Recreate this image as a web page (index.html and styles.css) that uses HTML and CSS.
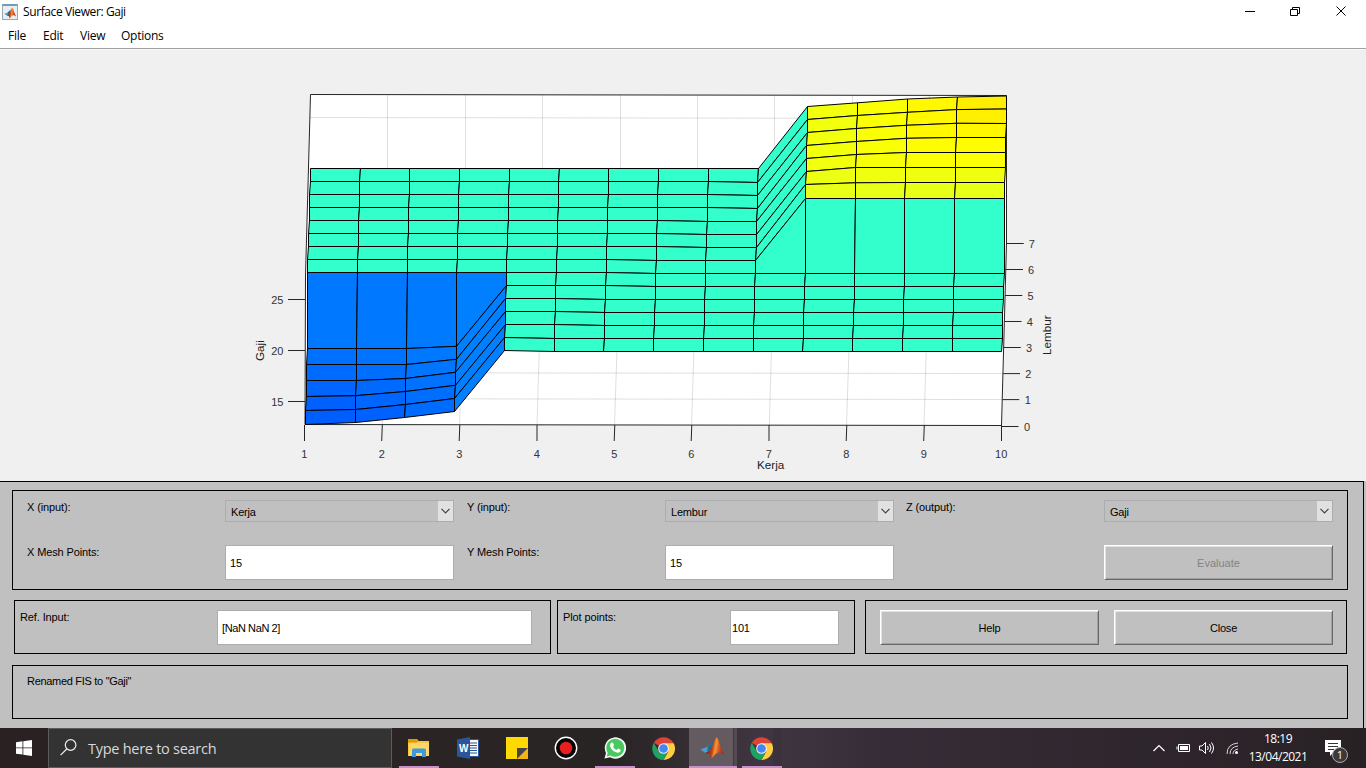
FILE: index.html
```html
<!DOCTYPE html>
<html lang="en">
<head>
<meta charset="utf-8">
<title>Surface Viewer: Gaji</title>
<link rel="stylesheet" href="styles.css">
</head>
<body>
<svg class="defs" aria-hidden="true">
  <defs>
    <linearGradient id="flame" x1="0" x2="1" y1="0" y2=".15"><stop offset="0" stop-color="#5d1a14"/><stop offset=".4" stop-color="#b53a17"/><stop offset=".62" stop-color="#f08a35"/><stop offset=".8" stop-color="#d9501c"/><stop offset="1" stop-color="#a52d10"/></linearGradient>
    <symbol id="matlab" viewBox="0 0 24 24">
      <path d="M.5 13.500 7.500 10.800 12.500 6.500 10 14.500 5.500 17z" fill="#4a9fd4"/>
      <path d="M8 10.500 12.500 6.500 14.500 4 11 14 7 15z" fill="#27688f"/>
      <path d="M5.500 17 10 14 13 8.500 15 3.500 16.700 1 18.500 4 21 12 24 18.800 19.500 16 15.500 18 11.500 22.800 9.500 18z" fill="url(#flame)"/>
      <path d="M16.700 1.500 17.500 8 15.500 17.500 12 22 14 14z" fill="#f6983a" opacity=".6"/>
    </symbol>
    <symbol id="chrome" viewBox="0 0 24 24">
      <path d="M12 12 1.800 6A12 12 0 0 1 22.400 6z" fill="#db4437"/>
      <path d="M12 6.500H22.700A12 12 0 0 1 12 24l5-9z" fill="#ffcd40"/>
      <path d="M1.800 6 7.200 15 12 17.500 16.800 15 12 24A12 12 0 0 1 1.800 6z" fill="#1da261"/>
      <circle cx="12" cy="12" r="5.600" fill="#f1f1f1"/><circle cx="12" cy="12" r="4.500" fill="#4285f4"/>
    </symbol>
  </defs>
</svg>
<div class="window">
  <header class="titlebar">
    <span class="app-icon"><svg width="14" height="12"><use href="#matlab"/></svg></span>
    <span class="title">Surface Viewer: Gaji</span>
    <svg class="controls" width="120" height="22" fill="none" stroke="#000">
      <path d="M5 10.500h10"/>
      <path d="M50.500 8.500h7v6h-7zM52.500 8.500v-2h7v6h-2"/>
      <path d="m96.500 5.500 9 9m0-9-9 9"/>
    </svg>
  </header>
  <nav class="menubar"><span class="m-file">File</span><span class="m-edit">Edit</span><span class="m-view">View</span><span class="m-options">Options</span></nav>
  <main class="figure">
    <svg class="plot" width="1366" height="432" viewBox="0 49 1366 432">
      <path class="box-fill" d="M310.500 94.500 1006.500 95.500V243.500L1001.500 425.500 305 424.500 305.500 276z"/>
      <g id="grid" class="grid"></g>
      <path class="box-line" d="M305 424.500 305.500 276 310.500 94.500 1006.500 95.500V243.500L1001.500 425.500z"/>
      <g id="mesh" class="mesh"></g>
      <g id="ticks" class="ticks"></g>
      <g class="axis-labels">
        <text x="757" y="469">Kerja</text>
        <text transform="translate(264 361) rotate(-90)">Gaji</text>
        <text transform="translate(1051 355) rotate(-90)">Lembur</text>
      </g>
    </svg>
  </main>
  <section class="controls-area">
    <div class="panel inputs">
      <label>X (input):</label><div class="select">Kerja<i><svg width="9" height="6"><path d="m.5 .8 4 4 4-4"/></svg></i></div>
      <label class="second">Y (input):</label><div class="select">Lembur<i><svg width="9" height="6"><path d="m.5 .8 4 4 4-4"/></svg></i></div>
      <label class="third">Z (output):</label><div class="select">Gaji<i><svg width="9" height="6"><path d="m.5 .8 4 4 4-4"/></svg></i></div>
      <label>X Mesh Points:</label><div class="field">15</div>
      <label class="second">Y Mesh Points:</label><div class="field">15</div>
      <span></span><div class="button disabled">Evaluate</div>
    </div>
    <div class="row">
      <div class="panel ref"><label>Ref. Input:</label><div class="field wide">[NaN NaN 2]</div></div>
      <div class="panel points"><label>Plot points:</label><div class="field">101</div></div>
      <div class="panel actions"><div class="button">Help</div><div class="button">Close</div></div>
    </div>
    <div class="panel status">Renamed FIS to "Gaji"</div>
  </section>
</div>
<footer class="taskbar">
  <div class="start"><svg width="16" height="16" fill="#fff"><path d="M0 2.300 6.500 1.300V7.500H0zM7.300 1.200 16 0V7.500H7.300zM0 8.300h6.500v6.300L0 13.700zM7.300 8.300H16V16l-8.700-1.300z"/></svg></div>
  <div class="search"><svg width="17" height="17" fill="none" stroke="#eee" stroke-width="1.200"><circle cx="10.600" cy="6" r="5.300"/><path d="M6.700 10 .6 16.200"/></svg><span>Type here to search</span></div>
  <div class="app explorer running"><svg width="22" height="20"><path d="M0 1h9l1.500 2H21v15H0z" fill="#f7c63d"/><path d="M0 1h8.500L10 3.500 8.500 4.500H0z" fill="#e19a00"/><path d="M1 5h20v13H1z" fill="#ffd767"/><path d="M4 19v-7q0-1.500 1.500-1.500h11Q18 10.500 18 12v7h-4v-4H8v4z" fill="#3f9ad9"/></svg></div>
  <div class="app"><svg width="22" height="22"><path d="M11 2.500h10.500v17H11z" fill="#f8f8fb" stroke="#2b579a"/><path d="M13 6h7M13 8.500h7M13 11h7M13 13.500h7M13 16h7" stroke="#2b579a" stroke-width="1.200"/><path d="M0 2.500 13 0v22L0 19.500z" fill="#2b579a"/><text x="2" y="14.500" class="word-w">W</text></svg></div>
  <div class="app"><svg width="22" height="22"><path d="M0 0h22v11L11 22H0z" fill="#ffd900"/><path d="M11 11h11L11 22z" fill="#454545"/><path d="M22 11v11H11z" fill="#f6b414"/></svg></div>
  <div class="app"><svg width="24" height="24"><circle cx="12" cy="12" r="10.700" fill="#050505" stroke="#fff" stroke-width="1.400"/><circle cx="12" cy="12" r="6.300" fill="#e7201f"/></svg></div>
  <div class="app running"><svg width="22" height="22"><path d="M.5 21.500 2 16A10.700 10.700 0 1 1 6 20.200z" fill="#f6faf6"/><path d="M2.700 19.400 3.700 15.700A9 9 0 1 1 6.400 18.400z" fill="#48c95f"/><path d="M7.500 5.500Q9 5 9.300 6.500L10 8.200Q10 8.800 9 9.800 10.300 12 12.600 12.900L14 11.500 16.700 12.800Q16.500 15.800 13.500 15.700 7.500 14.500 6 9 5.800 6.700 7.500 5.500z" fill="#fff"/></svg></div>
  <div class="app chrome"><svg width="23" height="23"><use href="#chrome"/></svg></div>
  <div class="app matlab running"><svg width="24" height="24"><use href="#matlab"/></svg></div>
  <div class="app last running"><svg width="23" height="23"><use href="#chrome"/></svg></div>
  <div class="tray">
    <svg width="90" height="20" fill="none" stroke="#fff">
      <path d="m1.500 13 5.500-5.500 5.500 5.500" stroke-width="1.200"/>
      <path d="M26.500 6.500h11v7h-11z"/><path d="M28 8h8v4h-8z" fill="#fff" stroke="none"/><path d="M25 8.500v3"/>
      <path d="M47.500 8v4h2.500l3.500 3.500v-11L50 8zM55.500 8q1.500 2 0 4M57.500 6q3 4 0 8M59.500 4.500q4 5.500 0 11"/>
      <path d="M75 16Q75 6 86 5M78 16Q78 9 86 8M81 16Q81 12 86 11" stroke="#d5d5d5"/><circle cx="84.500" cy="14.500" r="1.500" fill="#fff" stroke="none"/>
    </svg>
    <div class="clock"><span>18:19</span><span>13/04/2021</span></div>
    <div class="notify"><svg width="17" height="17"><path d="M0 0h16v12H9l-4 4v-4H0z" fill="#fff"/><path d="M3 3.500h10M3 6.500h10M3 9.500h6" stroke="#333"/></svg><b>1</b></div>
  </div>
</footer>
<script src="plot.js"></script>
</body>
</html>
```
FILE: styles.css
```css
* { box-sizing: border-box; }
body { margin: 0; width: 1366px; height: 768px; overflow: hidden; background: #c0c0c0; font-family: "Liberation Sans", Arial, sans-serif; }
.defs { position: absolute; width: 0; height: 0; }
.window { height: 728px; display: flex; flex-direction: column; }
.titlebar { height: 24px; background: #fff; display: flex; align-items: center; font: 12px "Open Sans", sans-serif; color: #000; }
.app-icon { width: 16px; height: 16px; margin: -1px 0 0 2px; display: flex; justify-content: center; align-items: flex-end; background: #e9eef2; border: 1px solid #9aa9b3; border-top: 2px solid #6e9cc0; }
.title { margin-left: 5px; padding-bottom: 2px; letter-spacing: -.4px; }
.controls { margin-left: auto; margin-right: 6px; }
.menubar { height: 25px; background: #fff; border-bottom: 1px solid #a0a0a0; display: flex; font: 12px/24px "Open Sans", sans-serif; letter-spacing: -.25px; padding-left: 8px; box-shadow: 0 1px #fafafa; z-index: 1; }
.m-file { width: 35px; }
.m-edit { width: 37px; }
.m-view { width: 41px; }
.figure { height: 432px; background: #f0f0f0; }
.plot { display: block; }
.box-fill { fill: #fff; }
.box-line { fill: none; stroke: #262626; }
.grid line { stroke: #262626; stroke-opacity: .15; }
.mesh polygon { stroke: #000; stroke-width: 1; stroke-linejoin: round; }
.ticks line { stroke: #262626; }
.ticks text { font-size: 11px; fill: #333; }
.axis-labels text { font-size: 11.700px; fill: #222; }
.controls-area { width: 1364px; height: 247px; border: solid #000; border-width: 1px 1px 0 0; padding: 8px 0 0 12px; font-size: 11px; letter-spacing: -.2px; color: #000; }
.panel { border: 1px solid #000; }
.inputs { width: 1336px; height: 100px; padding: 9px 0 0 14px; display: grid; grid-template-columns: 198px 229px 211px 229px 210px 229px; grid-template-rows: 45px 35px; align-items: start; }
label { line-height: 14px; white-space: nowrap; letter-spacing: -.12px; }
.second { padding-left: 13px; }
.third { padding-left: 12px; }
.select { height: 22px; border: 1px solid #abadb3; padding-left: 5px; display: flex; justify-content: space-between; align-items: stretch; line-height: 22px; }
.select i { width: 15px; background: #e1e1e1; display: flex; align-items: center; justify-content: center; }
.select path { fill: none; stroke: #444; stroke-width: 1.200; }
.field { height: 35px; border: 1px solid #abadb3; background: #fff; padding-left: 4px; line-height: 35px; }
.wide { letter-spacing: -.4px; }
.button { height: 35px; line-height: 34px; text-align: center; border: 1px solid; border-color: #fff #696969 #696969 #fff; box-shadow: inset 1px 1px #e3e3e3, inset -1px -1px #a0a0a0; }
.disabled { color: #838383; letter-spacing: 0; }
.row { display: flex; margin: 10px 0 0 2px; height: 54px; }
.row .panel { display: flex; padding-top: 9px; }
.ref { width: 537px; padding-left: 5px; }
.ref label { width: 197px; }
.ref .field { width: 315px; }
.points { width: 298px; margin-left: 6px; padding-left: 5px; }
.points label { width: 167px; }
.points .field { width: 109px; padding-left: 1px; }
.actions { width: 482px; margin-left: 10px; padding-left: 14px; gap: 15px; }
.actions .button { width: 219px; }
.status { width: 1336px; height: 54px; margin-top: 11px; padding: 8px 14px; line-height: 14px; letter-spacing: -.3px; }
.taskbar { height: 40px; display: flex; background: linear-gradient(90deg, #2a2122 0, #2b2424 30%, #292424 45%, #403642 56%, #352c37 65%, #30272f 80%, #282124 100%); }
.start { width: 48px; display: grid; place-items: center; }
.search { width: 344px; height: 40px; background: #333; border: 1px solid #5b5b5b; display: flex; align-items: center; padding-left: 11px; font: 14.500px "Open Sans", sans-serif; letter-spacing: -.27px; color: #d9d9d9; }
.search svg { margin-top: -2px; }
.search span { margin-left: 11px; }
.app { width: 40px; margin-right: 9px; display: flex; align-items: center; justify-content: center; }
.app.explorer { margin-left: 7px; }
.running { border-bottom: 2px solid #c590cc; padding-top: 2px; }
.app.chrome { padding-right: 1px; }
.app.matlab { width: 48px; margin: 0 5px 0 -4px; background: linear-gradient(90deg, #635b60 44px, #40373f 44px, #40373f 45px, #544a54 45px); padding-right: 2px; }
.app.last { margin: 0; padding-right: 1px; background: linear-gradient(90deg, transparent 31px, #0001 31px); }
.tray { margin-left: auto; width: 214px; display: flex; color: #fff; }
.tray > svg { margin-top: 10px; width: 90px; flex: none; }
.clock { width: 74px; margin-left: -1px; display: flex; flex-direction: column; align-items: center; font: 12px/18px "Open Sans", sans-serif; letter-spacing: -.5px; padding-top: 2px; }
.notify { position: relative; margin: 12px 0 0 10px; }
.notify b { position: absolute; left: 7px; top: 7px; width: 16px; height: 16px; border: 1px solid #aaa; border-radius: 50%; background: #3d393b; font: 11px/14px "Open Sans", sans-serif; text-align: center; }
.word-w { font: bold 10px "Liberation Sans", sans-serif; fill: #fff; }
```
FILE: plot.js
```js
const NS = 'http://www.w3.org/2000/svg';
const add = (parent, tag, attrs, text) => {
  const el = document.createElementNS(NS, tag);
  for (const k in attrs) el.setAttribute(k, attrs[k]);
  if (text !== undefined) el.textContent = text;
  document.getElementById(parent).appendChild(el);
};
const line = (g, x1, y1, x2, y2) => add(g, 'line', { x1, y1, x2, y2 });

// Projected heights of the low corner (columns 0-3, rows 0-5)
const low = [
  [424.5, 410.5, 396.5, 380.5, 364.5, 348.5],
  [422.5, 409.5, 395.7, 380.5, 364.5, 348.5],
  [417.5, 404.5, 391.5, 378.5, 364.5, 348.5],
  [411.5, 398.5, 385.3, 372.3, 359.3, 346.3]
];
// Projected heights of the high corner (columns 10-14, rows 7-14)
const high = [
  [198.5, 184.5, 171.5, 158.5, 145.5, 132.5, 119.5, 106.5],
  [198.5, 182.8, 167.5, 154.5, 141.5, 128.5, 115.5, 102.8],
  [198.5, 182.5, 167.5, 152.5, 138.3, 125.3, 112.3, 99],
  [198.5, 182.5, 167.5, 152.5, 137.5, 123.3, 109.6, 97],
  [198.5, 182.5, 167.5, 152.5, 137.5, 123.5, 109, 96]
];
const vx = (i, j) => Math.floor(305.3 + 49.75 * i + 0.37 * j) + 0.5;
const vy = (i, j) => {
  if (i <= 3 && j <= 5) return low[i][j];
  if (i >= 10 && j >= 7) return high[i - 10][j - 7];
  return 350.5 - 13 * j + (i >= 5 + Math.floor((j + 1) / 3) ? 1 : 0);
};
const lowFill = [
  ['#005eff', '#0061ff', '#0066ff', '#006bff', '#0070ff', '#0078ff'],
  ['#0061ff', '#0066ff', '#006aff', '#006eff', '#0073ff', '#0078ff'],
  ['#006cff', '#006eff', '#0072ff', '#0075ff', '#0078ff', '#007aff'],
  ['#0080ff', '#0080ff', '#0080ff', '#0080ff', '#0080ff', '#0080ff']
];
const highFill = [
  ['#e8ff17', '#edff12', '#f2ff0d', '#f2ff0d', '#f2ff0d', '#f2ff0d', '#f2ff0d'],
  ['#e8ff17', '#f0ff0f', '#f7ff08', '#faff05', '#faff05', '#faff05', '#faff05'],
  ['#e8ff17', '#f0ff0f', '#faff05', '#fffd00', '#fff800', '#fff800', '#fff800'],
  ['#e8ff17', '#f0ff0f', '#faff05', '#fffd00', '#fff700', '#fff000', '#ffee00']
];
for (let j = 13; j >= 0; j--) {
  for (let i = 0; i < 14; i++) {
    let fill = '#33ffcc';
    if (i <= 3 && j <= 5) fill = lowFill[i][j];
    if (i >= 10 && j >= 7) fill = highFill[i - 10][j - 7];
    const pts = [[i, j], [i + 1, j], [i + 1, j + 1], [i, j + 1]];
    add('mesh', 'polygon', { points: pts.map(p => vx(...p) + ',' + vy(...p)).join(' '), fill });
  }
}

const backX = [387.5, 465.5, 542.5, 620.5, 697.5, 774.5, 852.5, 929.5];
backX.forEach((x, k) => {
  line('grid', x, 95, x, 243.5);
  line('grid', x, 243.5, [382.3, 459.5, 537, 614.5, 691.5, 769.3, 846.5, 924][k], 425);
});
line('grid', 310, 117.5, 1006, 118.5);
line('grid', 305, 372.7, 1003, 373.5);
line('grid', 305, 398.7, 1002, 399.5);

const tickX = [304.5, 382, 459.5, 537, 614.5, 691.5, 769, 846.5, 924, 1001.5];
tickX.forEach((x, k) => {
  line('ticks', x + (k % 3 ? .3 : 0), 425, x - (k % 3 ? .3 : 0), 441);
  add('ticks', 'text', { x: x - .3, y: 458, 'text-anchor': 'middle' }, k + 1);
});
[[25, 299.5], [20, 350.5], [15, 401.5]].forEach(([v, y]) => {
  line('ticks', 288, y, 305, y);
  add('ticks', 'text', { x: 283.5, y: y + 4, 'text-anchor': 'end' }, v);
});
[426.5, 399.6, 373.6, 347.5, 321.5, 295.5, 269.5, 243.5].forEach((y, v) => {
  line('ticks', 1002 + v * .6, y, 1018.5 + v * .75, y);
  add('ticks', 'text', { x: 1024 + v * .68, y: y + 4 }, v);
});
```
